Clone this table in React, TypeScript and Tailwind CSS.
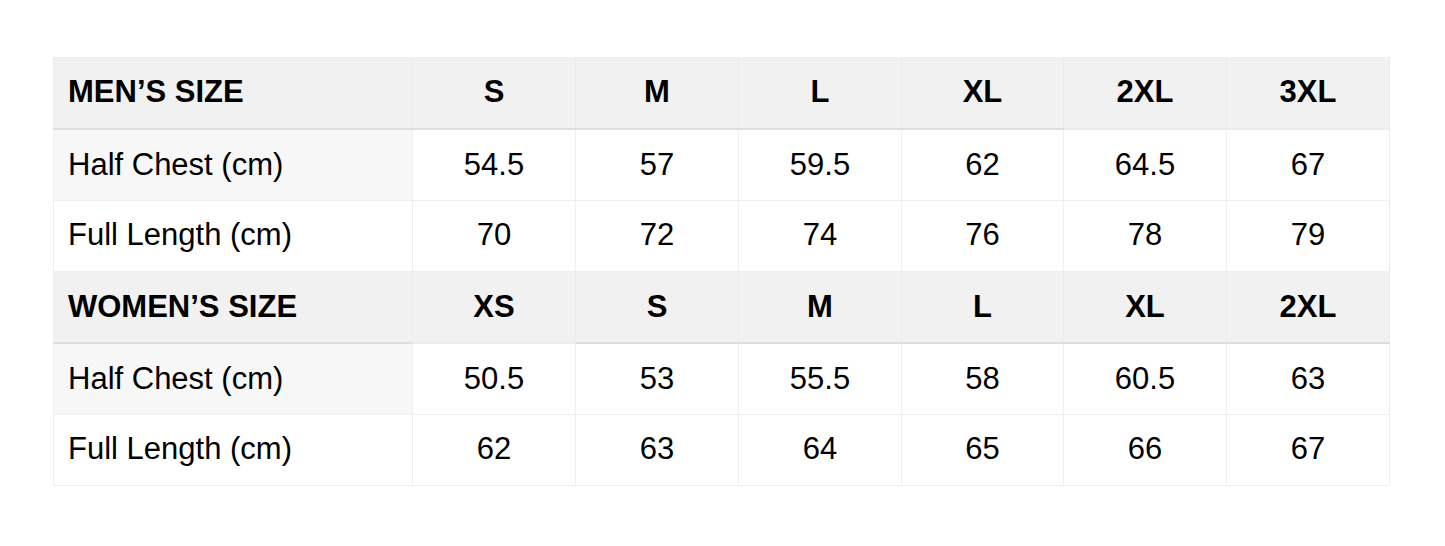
const men = {
  title: "MEN’S SIZE",
  sizes: ["S", "M", "L", "XL", "2XL", "3XL"],
  chest: ["54.5", "57", "59.5", "62", "64.5", "67"],
  length: ["70", "72", "74", "76", "78", "79"],
  // which header cells show the darker underline
  dark: [true, true, true, true, true, false, false],
};

const women = {
  title: "WOMEN’S SIZE",
  sizes: ["XS", "S", "M", "L", "XL", "2XL"],
  chest: ["50.5", "53", "55.5", "58", "60.5", "63"],
  length: ["62", "63", "64", "65", "66", "67"],
  dark: [true, false, true, true, true, true, true],
};

const widths = ["w-[359px]", "w-[163px]", "w-[163px]", "w-[163px]", "w-[162px]", "w-[163px]", "w-[163px]"];

function Section({ data }: { data: typeof men }) {
  return (
    <>
      <tr className="h-[72px] bg-[#f1f1f1]">
        {[data.title, ...data.sizes].map((t, i) => (
          <th
            key={i}
            className={`border-x border-[#ebebeb] border-b-2 font-bold ${
              data.dark[i] ? "border-b-[#dedede]" : "border-b-[#ececec]"
            } ${i === 0 ? "pl-[14px] text-left" : "text-center"}`}
          >
            {t}
          </th>
        ))}
      </tr>
      <tr className="h-[71px]">
        <td className="border border-[#efefef] bg-[#f7f7f7] pl-[14px] text-left">Half Chest (cm)</td>
        {data.chest.map((v, i) => (
          <td key={i} className="border border-[#efefef] bg-white text-center">
            {v}
          </td>
        ))}
      </tr>
      <tr className="h-[71px]">
        <td className="border border-[#efefef] bg-white pl-[14px] text-left">Full Length (cm)</td>
        {data.length.map((v, i) => (
          <td key={i} className="border border-[#efefef] bg-white text-center">
            {v}
          </td>
        ))}
      </tr>
    </>
  );
}

export default function App() {
  return (
    <div className="min-h-screen bg-white pl-[53px] pt-[57px] font-['Liberation_Sans',Arial,sans-serif] text-[31px] text-black">
      <table className="w-[1336px] table-fixed border-collapse">
        <colgroup>
          {widths.map((w, i) => (
            <col key={i} className={w} />
          ))}
        </colgroup>
        <tbody>
          <Section data={men} />
          <Section data={women} />
        </tbody>
      </table>
    </div>
  );
}
